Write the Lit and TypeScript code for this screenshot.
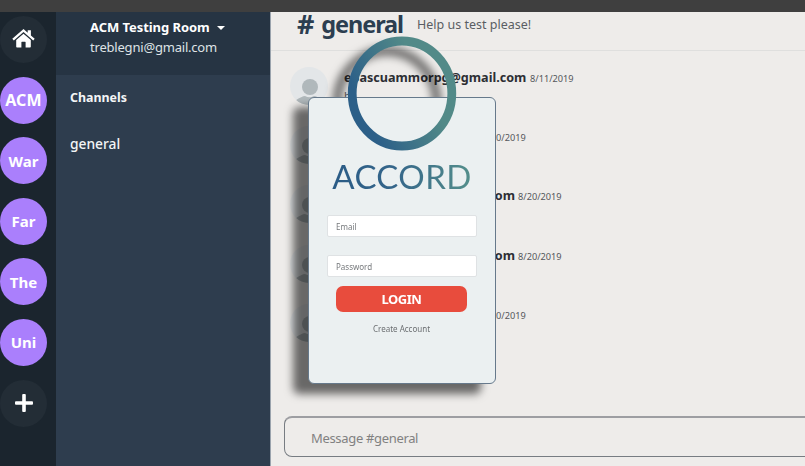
import { LitElement, html, css } from "lit";
import { customElement, property } from "lit/decorators.js";

const SERVERS = ["ACM", "War", "Far", "The", "Uni"];

interface Message {
  author: string;
  date: string;
  body: string;
  size: string;
}

const MESSAGES: Message[] = [
  { author: "epascuammorpg@gmail.com", date: "8/11/2019", body: "hi", size: "wide" },
  { author: "", date: "0/2019", body: "", size: "narrow" },
  { author: "om", date: "8/20/2019", body: "", size: "medium" },
  { author: "om", date: "8/20/2019", body: "", size: "medium" },
  { author: "", date: "0/2019", body: "", size: "narrow" },
];

@customElement("server-rail")
class ServerRail extends LitElement {
  static styles = css`
    :host {
      display: flex;
      flex-direction: column;
      gap: 13.6px;
      width: 56px;
      flex: none;
      padding-top: 4px;
      box-sizing: border-box;
      background: #1b252e;
    }
    .server {
      width: 47px;
      height: 47px;
      flex: none;
      border-radius: 50%;
      display: flex;
      align-items: center;
      justify-content: center;
      background: #aa7ffc;
      color: #fff;
      font-weight: 700;
      font-size: 15px;
      line-height: 20px;
      box-sizing: border-box;
    }
    .long {
      font-size: 16px;
      letter-spacing: 0.2px;
    }
    .tool {
      background: #232d36;
    }
    .home {
      padding-bottom: 2px;
    }
    svg {
      display: block;
      fill: #fff;
    }
  `;
  render() {
    return html`
      <div class="server tool home">
        <svg width="23" height="19" viewBox="0 0 23 19">
          <path d="M11.5 0 15.7 3.7V1.2h3.2v5.3l3.8 3.3-1.5 1.7L11.5 3 1.8 11.5.3 9.8 10.4.9q1.1-.9 1.1-.9Z" />
          <path d="m11.5 4.700 7.300 6.400v6.600q0 .8-.8.8h-4.400v-5.300q0-.5-.5-.5h-3.200q-.5 0-.5.5v5.300H5q-.8 0-.8-.8v-6.600Z" />
        </svg>
      </div>
      ${SERVERS.map((s) => html`<div class="server ${s === "ACM" ? "long" : ""}">${s}</div>`)}
      <div class="server tool">
        <svg width="18" height="18" viewBox="0 0 18 18">
          <rect x="7.200" y="0" width="3.600" height="18" rx="1" />
          <rect x="0" y="7.200" width="18" height="3.600" rx="1" />
        </svg>
      </div>
    `;
  }
}

@customElement("channel-panel")
class ChannelPanel extends LitElement {
  static styles = css`
    :host {
      display: flex;
      flex-direction: column;
      width: 214px;
      flex: none;
      box-sizing: border-box;
      background: #2e3d4e;
      color: #f4f5f6;
    }
    .room {
      height: 63px;
      box-sizing: border-box;
      padding: 5px 0 0 34px;
      background: #263443;
      line-height: 20px;
      white-space: nowrap;
    }
    .title {
      display: flex;
      align-items: center;
      gap: 7px;
      font-weight: 700;
      font-size: 13px;
      letter-spacing: -0.06px;
      color: #fff;
    }
    .caret {
      border: 4px solid transparent;
      border-top-color: #fff;
      border-bottom: 0;
      margin-top: 2px;
    }
    .mail {
      font-size: 13px;
      letter-spacing: -0.2px;
      color: #dfe3e6;
    }
    .list {
      display: flex;
      flex-direction: column;
      gap: 26px;
      padding: 13px 0 0 14px;
      line-height: 20px;
    }
    .heading {
      font-weight: 700;
      font-size: 12.4px;
    }
    .channel {
      font-weight: 500;
      font-size: 13.8px;
    }
  `;
  render() {
    return html`
      <div class="room">
        <div class="title">ACM Testing Room<span class="caret"></span></div>
        <div class="mail">treblegni@gmail.com</div>
      </div>
      <div class="list">
        <div class="heading">Channels</div>
        <div class="channel">general</div>
      </div>
    `;
  }
}

@customElement("chat-message")
class ChatMessage extends LitElement {
  @property({ attribute: false }) message!: Message;
  static styles = css`
    :host {
      display: flex;
      gap: 16px;
      height: 59.2px;
      flex: none;
    }
    .avatar {
      display: block;
      flex: none;
    }
    .content {
      padding-top: 1px;
    }
    .line {
      display: flex;
      align-items: baseline;
      gap: 3px;
      height: 20px;
      line-height: 20px;
      white-space: nowrap;
    }
    .author {
      font-size: 12.6px;
      font-weight: 700;
      color: #2c2e33;
    }
    .wide {
      width: 183px;
    }
    .narrow {
      width: 149px;
    }
    .medium {
      width: 171px;
      text-align: right;
    }
    .date {
      font-size: 9.2px;
      line-height: 20px;
      color: #55585c;
    }
    .narrow + .date {
      line-height: 22px;
    }
    .body {
      font-size: 11px;
      line-height: 16px;
      color: #55585c;
    }
  `;
  render() {
    const m = this.message;
    return html`
      <svg class="avatar" width="38" height="38" viewBox="0 0 38 38">
        <clipPath id="disc"><circle cx="19" cy="19" r="19" /></clipPath>
        <circle cx="19" cy="19" r="19" fill="#e3e6e8" />
        <g clip-path="url(#disc)" fill="#b0b8bb">
          <circle cx="20" cy="20" r="8" />
          <path d="M5.500 33.500Q12 29 15 29q4.500 2.500 9 0 3 0 9.500 4.500l-6 5H12Z" />
        </g>
      </svg>
      <div class="content">
        <div class="line">
          <span class="author ${m.size}">${m.author}</span><span class="date">${m.date}</span>
        </div>
        <div class="body">${m.body}</div>
      </div>
    `;
  }
}

@customElement("login-card")
class LoginCard extends LitElement {
  static styles = css`
    :host {
      display: block;
      filter: drop-shadow(-15px 10px 4px rgba(0, 0, 0, 0.56));
    }
    .card {
      width: 188px;
      height: 287px;
      box-sizing: border-box;
      border: 1px solid #66798b;
      border-radius: 6px;
      background: #ebf0f1;
      display: flex;
      flex-direction: column;
      align-items: center;
      padding-top: 58px;
    }
    .ring {
      position: absolute;
      left: 39px;
      top: -61px;
    }
    .brand {
      font-family: Lato, sans-serif;
      font-size: 33px;
      line-height: 40px;
      letter-spacing: 0.4px;
      background: linear-gradient(90deg, #2a5b86, #35668a 45%, #548f8b);
      -webkit-background-clip: text;
      background-clip: text;
      color: transparent;
    }
    .field {
      width: 150px;
      height: 22px;
      box-sizing: border-box;
      border: 1px solid #dfe2e4;
      border-radius: 2px;
      background: #fff;
      color: #777a7d;
      font-size: 8px;
      line-height: 21px;
      padding-left: 8px;
      margin-top: 18.5px;
    }
    .login {
      width: 131px;
      height: 26px;
      margin: 9px 1px 0 0;
      border-radius: 7px;
      background: #e84c3d;
      color: #fff;
      font-weight: 700;
      font-size: 13px;
      letter-spacing: -0.5px;
      line-height: 27px;
      text-align: center;
    }
    .create {
      margin: 11px 1px 0 0;
      font-size: 8px;
      line-height: 12px;
      color: #6c6f72;
    }
  `;
  render() {
    return html`
      <div class="card">
        <div class="brand">ACCORD</div>
        <div class="field">Email</div>
        <div class="field">Password</div>
        <div class="login">LOGIN</div>
        <div class="create">Create Account</div>
      </div>
      <svg class="ring" width="110" height="115" viewBox="0 0 110 115">
        <defs>
          <linearGradient id="tint" x1="0.15" y1="0.75" x2="0.75" y2="0.45">
            <stop offset="0" stop-color="#2c5f88" />
            <stop offset="1" stop-color="#528a88" />
          </linearGradient>
        </defs>
        <ellipse cx="55" cy="57.500" rx="49.800" ry="52.500" fill="none" stroke="url(#tint)" stroke-width="8.800" />
      </svg>
    `;
  }
}

@customElement("app-root")
class AppRoot extends LitElement {
  static styles = css`
    :host {
      display: flex;
      flex-direction: column;
      position: relative;
      width: 805px;
      height: 466px;
      overflow: hidden;
      background: #eeecea;
      font-family: "Noto Sans", "Open Sans", sans-serif;
    }
    .chrome {
      height: 12px;
      flex: none;
      background: #3f3f3f;
    }
    .workspace {
      display: flex;
      flex: 1;
      min-height: 0;
    }
    .main {
      flex: 1;
      min-width: 0;
      display: flex;
      flex-direction: column;
      border-left: 1px solid #9aa3ad;
    }
    .topic {
      height: 39px;
      box-sizing: border-box;
      border-bottom: 1px solid #dfdfde;
      display: flex;
      padding-left: 26px;
      white-space: nowrap;
    }
    .channel {
      display: flex;
      gap: 8px;
      width: 120px;
      font-size: 23.5px;
      font-weight: 700;
      letter-spacing: -1.1px;
      line-height: 24px;
      color: #2c3e50;
    }
    .hash {
      font-size: 27px;
    }
    .about {
      font-size: 12.5px;
      line-height: 25px;
      color: #5a5e63;
    }
    .feed {
      flex: 1;
      min-height: 0;
      padding: 16px 0 0 19px;
    }
    .composer {
      width: 560px;
      height: 41px;
      flex: none;
      box-sizing: border-box;
      margin: 0 0 9px 13px;
      padding-left: 26px;
      border: 1px solid #777c82;
      border-top: 2px solid #9d9ea2;
      border-radius: 8px;
      font-size: 13px;
      letter-spacing: -0.33px;
      line-height: 40px;
      color: #818181;
    }
    .dialog {
      position: absolute;
      left: 308px;
      top: 97px;
    }
  `;
  render() {
    return html`
      <div class="chrome"></div>
      <div class="workspace">
        <server-rail></server-rail>
        <channel-panel></channel-panel>
        <div class="main">
          <div class="topic">
            <div class="channel"><span class="hash">#</span><span>general</span></div>
            <div class="about">Help us test please!</div>
          </div>
          <div class="feed">
            ${MESSAGES.map((m) => html`<chat-message .message=${m}></chat-message>`)}
          </div>
          <div class="composer">Message #general</div>
        </div>
      </div>
      <login-card class="dialog"></login-card>
    `;
  }
}
